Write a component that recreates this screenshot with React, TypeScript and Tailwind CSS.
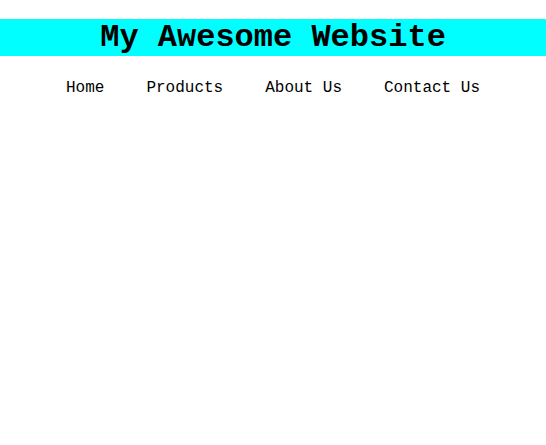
export default function App() {
    const links = ['Home', 'Products', 'About Us', 'Contact Us'];

    return (
        <div className="min-h-[445px] bg-white font-['Liberation_Mono',monospace] text-black">
            <header className="pt-[19px]">
                <h1 className="bg-[#00ffff] text-center text-[32px] font-bold leading-[37px]">My Awesome Website</h1>
            </header>
            <nav className="mt-[23px]">
                <ul className="flex justify-center text-[16px] leading-[18px]">
                    {links.map((link) => (
                        <li key={link} className="px-[21px]">
                            <a href="#">{link}</a>
                        </li>
                    ))}
                </ul>
            </nav>
        </div>
    );
}
